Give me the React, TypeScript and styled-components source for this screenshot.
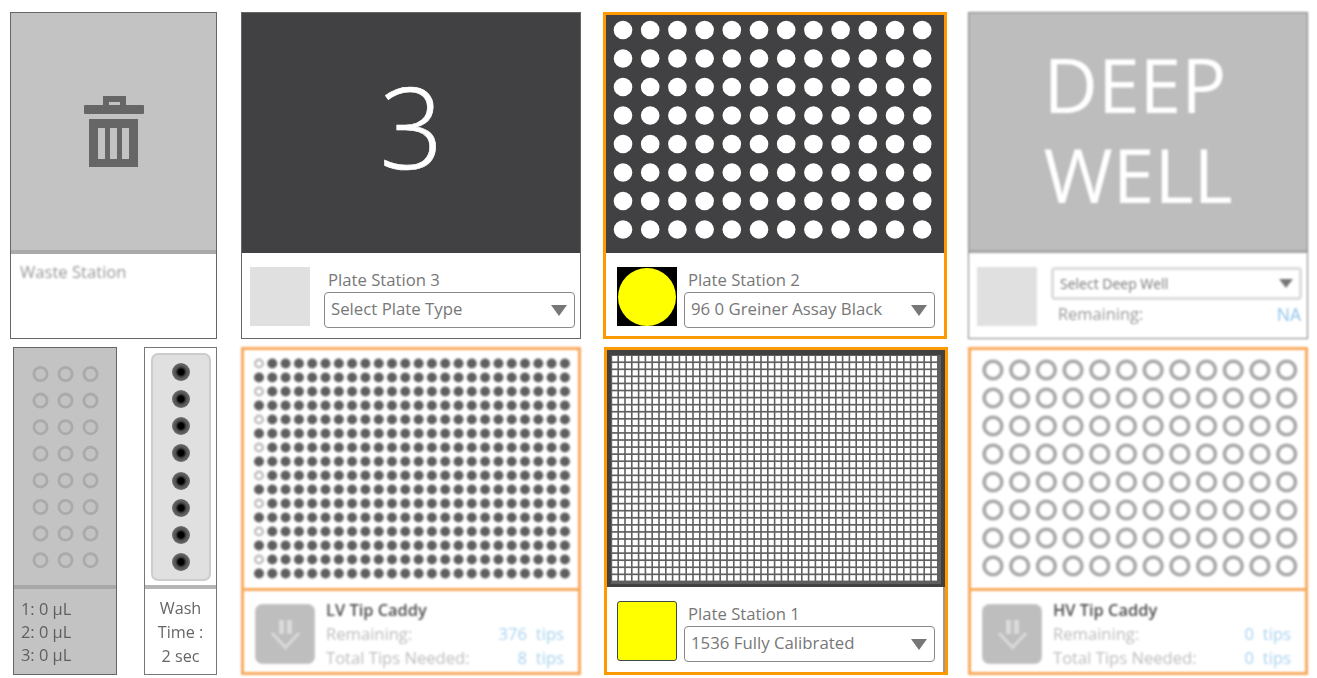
import React from "react";
import styled, { createGlobalStyle } from "styled-components";

const Global = createGlobalStyle`
  html, body { margin: 0; padding: 0; background: #fff; overflow: hidden; }
  * { box-sizing: border-box; }
  body { font-family: "Open Sans", "Noto Sans", sans-serif; }
`;

const Page = styled.div`
  width: 1317px;
  height: 678px;
  padding: 12px 0 0 10px;
  display: flex;
  flex-direction: column;
  gap: 8px;
`;
const Row = styled.div<{ $h: number }>`
  display: grid;
  grid-template-columns: 231px 362px 365px 340px;
  height: ${(p) => p.$h}px;
`;
const Pair = styled.div`
  width: 207px;
  height: 100%;
  padding-left: 3px;
  display: flex;
  justify-content: space-between;
`;
const Card = styled.div<{ $w: number; $border: string; $bw?: number; $blur?: number; $bg?: string; $ml?: number }>`
  width: ${(p) => p.$w}px;
  height: 100%;
  margin-left: ${(p) => p.$ml ?? 0}px;
  border: ${(p) => p.$bw ?? 1}px solid ${(p) => p.$border};
  background: ${(p) => p.$bg ?? "#fff"};
  display: flex;
  flex-direction: column;
  filter: ${(p) => (p.$blur ? `blur(${p.$blur}px)` : "none")};
`;
const Visual = styled.div<{ $h: number; $bg: string; $rule?: string; $ruleW?: number }>`
  height: ${(p) => p.$h}px;
  flex: none;
  background: ${(p) => p.$bg};
  border-bottom: ${(p) => (p.$rule ? `${p.$ruleW ?? 3}px solid ${p.$rule}` : "none")};
  display: flex;
  align-items: center;
  justify-content: center;
`;
const BigNumber = styled.div`
  color: #fff;
  font-weight: 300;
  font-size: 112px;
  line-height: 1;
  margin-top: -15px;
  margin-left: 1px;
  -webkit-text-stroke: 0.7px #fff;
`;
const DeepText = styled.div`
  color: #fff;
  font-weight: 400;
  font-size: 75px;
  line-height: 90px;
  text-align: left;
  width: 190px;
  margin-left: 1px;
  margin-top: -5px;
`;
const GridHolder = styled.div`
  flex: 1;
  display: flex;
  align-items: flex-start;
  justify-content: flex-start;
  padding: 1px 0 0 4px;
`;
const Footer = styled.div<{ $pl: number; $gap: number; $edge?: boolean }>`
  flex: 1;
  display: flex;
  align-items: flex-start;
  gap: ${(p) => p.$gap}px;
  padding: 14px 0 0 ${(p) => p.$pl}px;
  border-right: ${(p) => (p.$edge ? "2px solid #999" : "none")};
`;
const Swatch = styled.div<{ $bg?: string; $square?: boolean }>`
  width: 60px;
  height: ${(p) => (p.$square ? 60 : 59)}px;
  flex: none;
  background: ${(p) => p.$bg ?? "#e0e0e0"};
  display: flex;
  align-items: center;
  justify-content: center;
  border: ${(p) => (p.$square ? "1px solid #3c4a4c" : "none")};
  border-radius: ${(p) => (p.$square ? "3px" : "0")};
`;
const YellowDot = styled.div`
  width: 58px;
  height: 58px;
  border-radius: 50%;
  background: #ffff00;
`;
const Field = styled.div`
  width: 251px;
  flex: none;
  display: flex;
  flex-direction: column;
  margin-top: 3px;
`;
const Label = styled.div`
  color: #777;
  font-size: 16.7px;
  line-height: 20px;
  padding: 0 0 2px 4px;
  white-space: nowrap;
`;
const Select = styled.div`
  height: 36px;
  border: 1px solid #8a8a8a;
  border-radius: 4px;
  display: flex;
  align-items: center;
  justify-content: space-between;
  padding: 0 7px 0 6px;
  color: #777;
  font-size: 16.8px;
  white-space: nowrap;
`;
const SelectValue = styled.span`
  margin-top: -4px;
`;
const Caret = styled.span<{ $w?: number }>`
  width: 0;
  height: 0;
  border-left: ${(p) => (p.$w ?? 16) / 2}px solid transparent;
  border-right: ${(p) => (p.$w ?? 16) / 2}px solid transparent;
  border-top: ${(p) => ((p.$w ?? 16) * 0.7).toFixed(1)}px solid #777;
`;
const WasteLabel = styled.div`
  padding: 7px 9px;
  color: #999;
  font-size: 16.6px;
  line-height: 22px;
  filter: blur(1.1px);
`;
const TrashWrap = styled.div`
  display: flex;
  filter: blur(0.6px);
`;
const DeepField = styled.div`
  flex: 1;
  display: flex;
  flex-direction: column;
  gap: 3px;
  padding-right: 5px;
`;
const DeepSelect = styled.div`
  height: 33px;
  border: 3px solid #dcdcdc;
  border-radius: 4px;
  display: flex;
  align-items: center;
  justify-content: space-between;
  padding: 0 6px;
  color: #777;
  font-size: 14px;
`;
const StatRow = styled.div`
  display: flex;
  justify-content: space-between;
  padding: 0 1px 0 7px;
  font-size: 16.4px;
  line-height: 22px;
  color: #999;
`;
const Blue = styled.span`
  color: #8fc2ea;
  font-size: 17.5px;
`;
const VolumeText = styled.div`
  flex: 1;
  padding: 8px 7px;
  color: #5f5f5f;
  font-size: 16.4px;
  line-height: 23px;
  filter: blur(0.5px);
`;
const WashPanel = styled.div`
  width: 60px;
  height: 228px;
  background: #e0e0e0;
  border: 2px solid #ccc;
  border-radius: 7px;
  display: flex;
  flex-direction: column;
  align-items: center;
  justify-content: space-between;
  padding: 8px 0 8px;
`;
const WashWell = styled.div`
  width: 18px;
  height: 18px;
  border-radius: 50%;
  background: radial-gradient(circle, #000 0 22%, #4f4f4f 42%, #666 65%, #999 85%, #d8d8d8 100%);
`;
const WashVisual = styled.div`
  height: 241px;
  flex: none;
  padding: 5px 5px 0;
  border-bottom: 4px solid #b5b5b5;
  display: flex;
  justify-content: center;
`;
const WashText = styled.div`
  flex: 1;
  color: #666;
  font-size: 16.2px;
  line-height: 24px;
  text-align: center;
  padding-top: 7px;
  white-space: nowrap;
  filter: blur(0.4px);
`;
const TipFooter = styled.div`
  flex: 1;
  display: flex;
  align-items: flex-start;
  gap: 11px;
  padding: 13px 14px 0 11px;
`;
const TipButton = styled.div`
  width: 60px;
  height: 60px;
  flex: none;
  background: #bebebe;
  border: 1px solid #c9c9c9;
  border-radius: 7px;
  display: flex;
  align-items: center;
  justify-content: center;
`;
const TipInfo = styled.div`
  flex: 1;
  display: flex;
  flex-direction: column;
  margin-top: -6px;
`;
const TipTitle = styled.div`
  color: #4f4f4f;
  font-size: 16.4px;
  font-weight: 600;
  line-height: 24px;
`;
const TipRow = styled.div`
  display: grid;
  grid-template-columns: 1fr 50px 37px;
  color: #bdbdbd;
  font-size: 16.6px;
  line-height: 24px;
  white-space: nowrap;
`;
const TipValue = styled.span`
  color: #a9d2f0;
  text-align: right;
`;

const range = (n: number) => Array.from({ length: n }, (_, i) => i);

const Trash = () => (
  <svg width="60" height="71" viewBox="0 0 60 71">
    <path
      fill="#666"
      fillRule="evenodd"
      d="M19 9V0h23v9h17a1 1 0 0 1 1 1v7a1 1 0 0 1-1 1H1a1 1 0 0 1-1-1v-7a1 1 0 0 1 1-1zM25 6v3h11V6z"
    />
    <path
      fill="#666"
      fillRule="evenodd"
      d="M5 23h49v48H5zM14 32v31h7V32zM26 32v31h7V32zM38 32v31h7V32z"
    />
  </svg>
);

const Plate96 = () => (
  <svg width="338" height="238">
    {range(8).map((r) =>
      range(12).map((c) => (
        <circle key={`${r}-${c}`} cx={17 + c * 27.2} cy={15 + r * 28.5} r={9.3} fill="#fff" />
      ))
    )}
  </svg>
);

const Plate1536 = () => (
  <svg width="330" height="229">
    <rect width="330" height="229" fill="#5f5f5f" />
    {range(32).map((r) =>
      range(48).map((c) => (
        <rect key={`${r}-${c}`} x={1.2 + c * 6.8} y={1 + r * 7.07} width={5.2} height={5.4} fill="#fff" />
      ))
    )}
  </svg>
);

const Tips384 = () => (
  <svg width="338" height="238">
    {range(16).map((r) =>
      range(24).map((c) =>
        c === 0 && r % 2 === 0 ? (
          <circle key={`${r}-${c}`} cx={15 + c * 13.3} cy={13.5 + r * 14} r={3.8} fill="#fff" stroke="#bbb" strokeWidth={2.4} />
        ) : (
          <circle key={`${r}-${c}`} cx={15 + c * 13.3} cy={13.5 + r * 14} r={5} fill="#5f5f5f" />
        )
      )
    )}
  </svg>
);

const TipsHV = () => (
  <svg width="338" height="238">
    {range(8).map((r) =>
      range(12).map((c) => (
        <circle key={`${r}-${c}`} cx={22 + c * 26.7} cy={20 + r * 28} r={8.8} fill="none" stroke="#a8a8a8" strokeWidth={3.6} />
      ))
    )}
  </svg>
);

const Reservoir = () => (
  <svg width="102" height="237">
    {range(8).map((r) =>
      range(3).map((c) => (
        <circle key={`${r}-${c}`} cx={26.5 + c * 25} cy={26 + r * 26.6} r={6.6} fill="none" stroke="#aaa" strokeWidth={2.8} />
      ))
    )}
  </svg>
);

const TipArrow = () => (
  <svg width="34" height="34" viewBox="0 0 34 34">
    <path fill="#dadada" d="M11 3h5v14h-5zM19 3h5v14h-5z" />
    <path d="M4 16l13.5 14.5L31 16" fill="none" stroke="#dadada" strokeWidth="3" />
  </svg>
);

const TipStats = ({ title, remaining, needed }: { title: string; remaining: number; needed: number }) => (
  <TipFooter>
    <TipButton>
      <TipArrow />
    </TipButton>
    <TipInfo>
      <TipTitle>{title}</TipTitle>
      <TipRow>
        <span>Remaining:</span>
        <TipValue>{remaining}</TipValue>
        <TipValue>tips</TipValue>
      </TipRow>
      <TipRow>
        <span>Total Tips Needed:</span>
        <TipValue>{needed}</TipValue>
        <TipValue>tips</TipValue>
      </TipRow>
    </TipInfo>
  </TipFooter>
);

const Picker = ({ label, value }: { label: string; value: string }) => (
  <Field>
    <Label>{label}</Label>
    <Select>
      <SelectValue>{value}</SelectValue>
      <Caret />
    </Select>
  </Field>
);

export default function App() {
  return (
    <>
      <Global />
      <Page>
        <Row $h={327}>
          <Card $w={207} $border="#666">
            <Visual $h={241} $bg="#c3c3c3" $rule="#aaa" $ruleW={4}>
              <TrashWrap>
                <Trash />
              </TrashWrap>
            </Visual>
            <WasteLabel>Waste Station</WasteLabel>
          </Card>
          <Card $w={340} $border="#666">
            <Visual $h={240} $bg="#414042">
              <BigNumber>3</BigNumber>
            </Visual>
            <Footer $pl={8} $gap={14}>
              <Swatch />
              <Picker label="Plate Station 3" value="Select Plate Type" />
            </Footer>
          </Card>
          <Card $w={344} $border="#ff9900" $bw={3}>
            <Visual $h={238} $bg="#414042">
              <Plate96 />
            </Visual>
            <Footer $pl={11} $gap={7}>
              <Swatch $bg="#000">
                <YellowDot />
              </Swatch>
              <Picker label="Plate Station 2" value="96 0 Greiner Assay Black" />
            </Footer>
          </Card>
          <Card $w={340} $border="#808080" $blur={1}>
            <Visual $h={240} $bg="#bdbdbd" $rule="#a5a5a5">
              <DeepText>
                DEEP
                <br />
                WELL
              </DeepText>
            </Visual>
            <Footer $pl={8} $gap={14}>
              <Swatch />
              <DeepField>
                <DeepSelect>
                  Select Deep Well
                  <Caret $w={14} />
                </DeepSelect>
                <StatRow>
                  <span>Remaining:</span>
                  <Blue>NA</Blue>
                </StatRow>
              </DeepField>
            </Footer>
          </Card>
        </Row>
        <Row $h={326}>
          <Pair>
            <Card $w={104} $border="#666" $bg="#c3c3c3" $blur={0.7}>
              <Visual $h={241} $bg="#c3c3c3" $rule="#a8a8a8" $ruleW={4}>
                <Reservoir />
              </Visual>
              <VolumeText>
                1: 0 µL
                <br />
                2: 0 µL
                <br />
                3: 0 µL
              </VolumeText>
            </Card>
            <Card $w={73} $border="#777" $blur={0.6}>
              <WashVisual>
                <WashPanel>
                  {range(8).map((i) => (
                    <WashWell key={i} />
                  ))}
                </WashPanel>
              </WashVisual>
              <WashText>
                Wash
                <br />
                Time :
                <br />2 sec
              </WashText>
            </Card>
          </Pair>
          <Card $w={340} $border="#f9a95c" $bw={3} $blur={1}>
            <Visual $h={241} $bg="#fff" $rule="#f9a95c">
              <Tips384 />
            </Visual>
            <TipStats title="LV Tip Caddy" remaining={376} needed={8} />
          </Card>
          <Card $w={344} $border="#ff9900" $bw={3} $ml={1}>
            <Visual $h={237} $bg="#414042">
              <GridHolder>
                <Plate1536 />
              </GridHolder>
            </Visual>
            <Footer $pl={10} $gap={7} $edge>
              <Swatch $bg="#ffff00" $square />
              <Picker label="Plate Station 1" value="1536 Fully Calibrated" />
            </Footer>
          </Card>
          <Card $w={340} $border="#f9a95c" $bw={3} $blur={1}>
            <Visual $h={241} $bg="#fff" $rule="#f9a95c">
              <TipsHV />
            </Visual>
            <TipStats title="HV Tip Caddy" remaining={0} needed={0} />
          </Card>
        </Row>
      </Page>
    </>
  );
}
